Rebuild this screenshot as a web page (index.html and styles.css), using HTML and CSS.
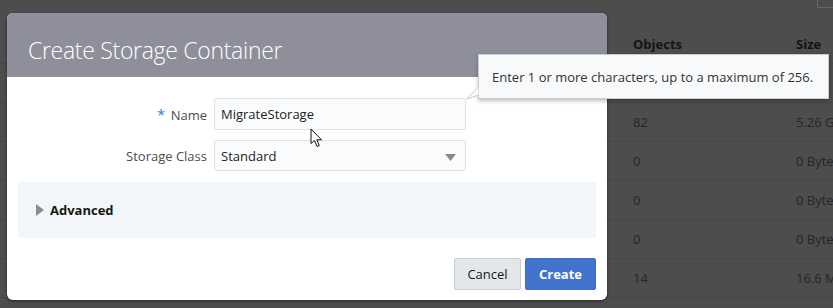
FILE: index.html
```html
<!DOCTYPE html>
<html>
<head>
<meta charset="utf-8">
<link rel="stylesheet" href="styles.css">
</head>
<body>
<div class="page">
  <div class="toolbar"><span class="tool-btn"></span></div>
  <div class="table">
    <div class="row head"><span></span><span>Objects</span><span>Size</span></div>
    <div class="row"><span></span><span></span><span></span></div>
    <div class="row"><span></span><span>82</span><span>5.26 GB</span></div>
    <div class="row"><span></span><span>0</span><span>0 Bytes</span></div>
    <div class="row"><span></span><span>0</span><span>0 Bytes</span></div>
    <div class="row"><span></span><span>0</span><span>0 Bytes</span></div>
    <div class="row"><span></span><span>14</span><span>16.6 MB</span></div>
  </div>
</div>

<div class="dialog">
  <div class="dialog-header">Create Storage Container</div>
  <div class="dialog-body">
    <div class="form">
      <label class="lbl"><span class="req">*</span> Name</label>
      <div class="field">MigrateStorage</div>
      <label class="lbl">Storage Class</label>
      <div class="field select">Standard
        <svg class="caret" width="11" height="7" viewBox="0 0 11 7"><polygon points="0,0 11,0 5.5,7" fill="#8a8a8a"/></svg>
      </div>
    </div>
    <div class="advanced">
      <svg class="tri" width="8" height="12" viewBox="0 0 8 12"><polygon points="0,0 8,6 0,12" fill="#8b8c94"/></svg>
      <span>Advanced</span>
    </div>
    <div class="footer">
      <button class="btn cancel">Cancel</button>
      <button class="btn create">Create</button>
    </div>
  </div>
</div>

<div class="tooltip">Enter 1 or more characters, up to a maximum of 256.</div>
<svg class="tip-arrow" width="16" height="14" viewBox="0 0 16 14"><polygon points="13,0.5 13,9 0.5,13" fill="#f8f9fa" stroke="#c8cdd3" stroke-width="1"/><rect x="13" y="0" width="3" height="10" fill="#f8f9fa"/></svg>

<svg class="cursor" width="13" height="20" viewBox="0 0 13 20"><path d="M1,1 L1,15.5 L4.5,12.5 L7,18.5 L9.3,17.5 L6.8,11.8 L11.5,11.8 Z" fill="#fff" stroke="#111" stroke-width="1" stroke-linejoin="round"/></svg>
</body>
</html>
```

FILE: styles.css
```css
html, body {
  margin: 0;
  padding: 0;
}
body {
  width: 833px;
  height: 308px;
  overflow: hidden;
  background: #4d4d4d;
  font-family: "Open Sans", "Noto Sans", sans-serif;
  position: relative;
}
.page {
  width: 833px;
}
.toolbar {
  height: 24px;
  display: flex;
  justify-content: flex-end;
  align-items: flex-start;
}
.tool-btn {
  width: 20px;
  height: 7px;
  margin-right: -6px;
  border: 1px solid #666;
  border-top: none;
  border-radius: 0 0 2px 2px;
}
.table {
  display: flex;
  flex-direction: column;
}
.row {
  display: grid;
  grid-template-columns: 633px 163px 1fr;
  height: 38px;
  align-items: center;
  border-bottom: 1px solid #464646;
  font-size: 13px;
  color: #262626;
  white-space: nowrap;
}
.row.head {
  font-weight: 700;
  color: #141414;
  height: 39px;
}
.dialog {
  position: absolute;
  left: 7px;
  top: 13px;
  width: 600px;
  height: 287px;
  background: #fff;
  border-radius: 6px;
  overflow: hidden;
  box-shadow: 0 1px 3px rgba(0,0,0,0.5);
  display: flex;
  flex-direction: column;
}
.dialog-header {
  height: 64px;
  background: #8e8f9a;
  color: #fff;
  font-size: 23px;
  font-weight: 300;
  padding-left: 21px;
  line-height: 74px;
  box-sizing: border-box;
  flex: none;
  letter-spacing: -0.3px;
}
.dialog-body {
  flex: 1;
  display: flex;
  flex-direction: column;
  padding: 21px 11px 10px;
}
.form {
  display: grid;
  grid-template-columns: 189px 252px;
  column-gap: 7px;
  row-gap: 10px;
  align-items: center;
}
.lbl {
  text-align: right;
  font-size: 13px;
  color: #4d4d4d;
}
.req {
  color: #3b7bd4;
  font-size: 15px;
  margin-right: 2px;
}
.field {
  height: 32px;
  box-sizing: border-box;
  border: 1px solid #dfe3e8;
  border-radius: 2px;
  background: #fafbfd;
  font-size: 13px;
  color: #222;
  padding-left: 6px;
  display: flex;
  align-items: center;
  position: relative;
}
.field.select {
  height: 31px;
}
.caret {
  position: absolute;
  right: 9px;
  top: 13px;
}
.advanced {
  margin-top: 11px;
  height: 56px;
  background: #f3f6f9;
  display: flex;
  align-items: center;
  padding-left: 18px;
  gap: 6px;
  font-size: 13px;
  font-weight: 700;
  color: #161616;
}
.tri {
  margin-top: 0px;
}
.footer {
  margin-top: 20px;
  display: flex;
  justify-content: flex-end;
  gap: 4px;
}
.btn {
  height: 32px;
  font-family: inherit;
  font-size: 13px;
  border-radius: 2px;
  padding: 0;
}
.cancel {
  width: 67px;
  background: #e4e7ea;
  border: 1px solid #c9cdd2;
  color: #161616;
}
.create {
  width: 71px;
  background: #4274cd;
  border: 1px solid #3d6cc0;
  color: #fff;
  font-weight: 700;
}
.tooltip {
  position: absolute;
  left: 478px;
  top: 54px;
  width: 351px;
  height: 45px;
  box-sizing: border-box;
  background: #f8f9fa;
  border: 1px solid #c8cdd3;
  box-shadow: 0 2px 4px rgba(0,0,0,0.25);
  font-size: 13px;
  color: #333;
  padding-left: 13px;
  display: flex;
  align-items: center;
  white-space: nowrap;
}
.tip-arrow {
  position: absolute;
  left: 466px;
  top: 86px;
}
.cursor {
  position: absolute;
  left: 310px;
  top: 128px;
}
```
